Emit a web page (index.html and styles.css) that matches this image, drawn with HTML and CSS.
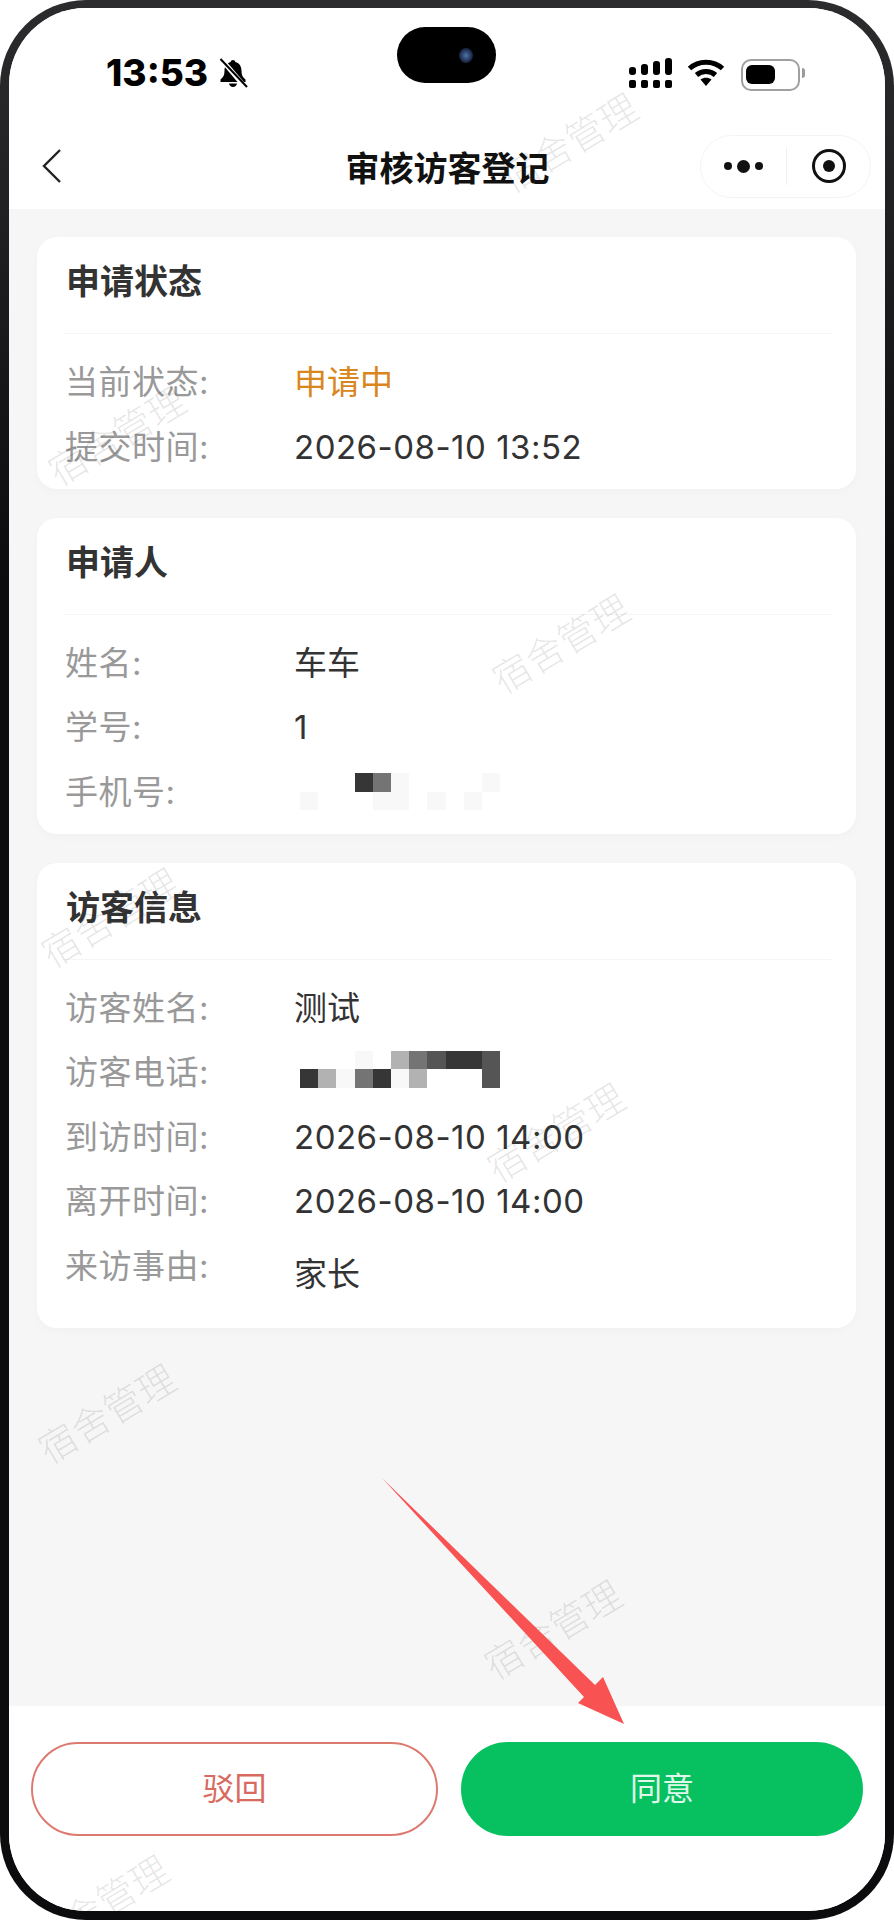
FILE: index.html
```html
<!DOCTYPE html>
<html lang="zh-CN">
  <head>
    <title>审核访客登记</title>
    <meta http-equiv="Content-Type" content="text/html; charset=UTF-8"/>
    <link rel="stylesheet" href="styles.css">
  </head>
  <body>
    <div class="phone">
      <div class="screen">
        <div class="notch"><span class="camera"></span></div>

        <div class="status-bar">
          <div class="status-left">
            <span class="time">13:53</span>
            <svg class="bell" viewBox="0 0 30 30">
              <path d="M15 2c1.300 0 2.200.9 2.300 2.100 4.200 1 6.200 4.400 6.200 9 0 4.300 1.200 6.300 4 8.500v2.400H2.500v-2.400c2.800-2.200 4-4.200 4-8.500 0-4.600 2-8 6.200-9C12.800 2.900 13.700 2 15 2z" fill="#000"/>
              <path d="M11 25.500h8c-.3 2.200-2 3.500-4 3.500s-3.700-1.300-4-3.500z" fill="#000"/>
              <path d="M4 2l23 27" stroke="#fff" stroke-width="5"/>
              <path d="M2.500 1L29 29" stroke="#000" stroke-width="2"/>
            </svg>
          </div>
          <div class="status-right">
            <div class="signal">
              <span class="bar bar-1"></span>
              <span class="bar bar-2"></span>
              <span class="bar bar-3"></span>
              <span class="bar bar-4"></span>
            </div>
            <svg class="wifi" viewBox="0 0 38 28">
              <path d="M2.500 10.500C11.500 2 26.500 2 35.500 10.500" fill="none" stroke="#000" stroke-width="5"/>
              <path d="M9.500 17c5.500-4.800 13.500-4.800 19 0" fill="none" stroke="#000" stroke-width="5"/>
              <path d="M13.500 21.500c3.300-2.200 7.700-2.200 11 0L19 28z" fill="#000"/>
            </svg>
            <div class="battery"><span class="battery-level"></span></div>
            <span class="battery-nub"></span>
          </div>
        </div>

        <div class="nav">
          <svg class="back" viewBox="0 0 20 34">
            <path d="M18 1L2 17l16 16" fill="none" stroke="#222" stroke-width="2.400"/>
          </svg>
          <div class="nav-title">审核访客登记</div>
          <div class="capsule">
            <div class="more">
              <span class="dot"></span>
              <span class="dot dot-big"></span>
              <span class="dot"></span>
            </div>
            <span class="capsule-line"></span>
            <div class="target"><span class="target-dot"></span></div>
          </div>
        </div>

        <div class="content">
          <div class="card">
            <div class="card-title">申请状态</div>
            <div class="card-body">
              <div class="row">
                <div class="label">当前状态:</div>
                <div class="value status-pending">申请中</div>
              </div>
              <div class="row">
                <div class="label">提交时间:</div>
                <div class="value date">2026-08-10 13:52</div>
              </div>
            </div>
          </div>

          <div class="card">
            <div class="card-title">申请人</div>
            <div class="card-body">
              <div class="row">
                <div class="label">姓名:</div>
                <div class="value">车车</div>
              </div>
              <div class="row">
                <div class="label">学号:</div>
                <div class="value">1</div>
              </div>
              <div class="row">
                <div class="label">手机号:</div>
                <div class="mosaic">
                  <span></span><span></span><span></span><span class="s-dark"></span><span class="s-mid"></span><span class="s-pale"></span><span></span><span></span><span></span><span></span><span class="s-pale"></span>
                  <span class="s-pale"></span><span></span><span></span><span></span><span class="s-pale"></span><span class="s-pale"></span><span></span><span class="s-pale"></span><span></span><span class="s-pale"></span><span></span>
                </div>
              </div>
            </div>
          </div>

          <div class="card">
            <div class="card-title">访客信息</div>
            <div class="card-body">
              <div class="row">
                <div class="label">访客姓名:</div>
                <div class="value">测试</div>
              </div>
              <div class="row">
                <div class="label">访客电话:</div>
                <div class="mosaic mosaic-up">
                  <span></span><span></span><span></span><span class="s-pale"></span><span></span><span class="s-light"></span><span class="s-mid"></span><span class="s-dim"></span><span class="s-dark"></span><span class="s-dark"></span><span class="s-dim"></span>
                  <span class="s-dark"></span><span class="s-light"></span><span class="s-pale"></span><span class="s-mid"></span><span class="s-dark"></span><span class="s-pale"></span><span class="s-light"></span><span></span><span></span><span></span><span class="s-dim"></span>
                </div>
              </div>
              <div class="row">
                <div class="label">到访时间:</div>
                <div class="value date">2026-08-10 14:00</div>
              </div>
              <div class="row">
                <div class="label">离开时间:</div>
                <div class="value date">2026-08-10 14:00</div>
              </div>
              <div class="row row-reason">
                <div class="label">来访事由:</div>
                <div class="value">家长</div>
              </div>
            </div>
          </div>
        </div>

        <div class="footer">
          <div class="btn btn-reject">驳回</div>
          <div class="btn btn-agree">同意</div>
        </div>

        <div class="watermarks">
          <span class="wm wm-1">宿舍管理</span>
          <span class="wm wm-2">宿舍管理</span>
          <span class="wm wm-3">宿舍管理</span>
          <span class="wm wm-4">宿舍管理</span>
          <span class="wm wm-5">宿舍管理</span>
          <span class="wm wm-6">宿舍管理</span>
          <span class="wm wm-7">宿舍管理</span>
          <span class="wm wm-8">宿舍管理</span>
        </div>
      </div>

      <svg class="arrow" viewBox="0 0 894 1920">
        <polygon points="382,1478 595,1685 603,1677 624,1724 578,1703 584,1697" fill="#f95252"/>
      </svg>
    </div>
  </body>
</html>
```

FILE: styles.css
```css
body {
  margin: 0;
  background: #fff;
  font-family: 'Inter', 'Noto Sans CJK SC', sans-serif;
}

.phone {
  position: relative;
  width: 894px;
  height: 1920px;
  padding: 8px 9px 9px;
  box-sizing: border-box;
  border-radius: 86px;
  background: linear-gradient(#2c2c2e, #0c0c0e 30%);
}

.screen {
  position: relative;
  display: flex;
  flex-direction: column;
  height: 100%;
  overflow: hidden;
  border-radius: 77px;
  background: #f6f6f6;
}

/* status bar */
.notch {
  position: absolute;
  left: 388px;
  top: 19px;
  width: 99px;
  height: 56px;
  border-radius: 28px;
  background: #000;
}

.camera {
  position: absolute;
  left: 62px;
  top: 21px;
  width: 14px;
  height: 15px;
  border-radius: 50%;
  background: radial-gradient(#4f74ab, #1c2c4c 60%, #05070c);
}

.status-bar {
  display: flex;
  justify-content: space-between;
  height: 65px;
  padding: 50px 80px 0 97px;
  background: #fff;
}

.status-left {
  display: flex;
  align-items: center;
  height: 30px;
  gap: 10px;
}

.time {
  font-size: 37px;
  line-height: 30px;
  font-weight: 800;
  color: #000;
}

.bell {
  width: 30px;
  height: 30px;
}

.status-right {
  display: flex;
  align-items: flex-start;
  height: 30px;
}

.signal {
  display: flex;
  gap: 5px;
  width: 43px;
  height: 30px;
  margin-right: 15px;
}

.bar {
  position: relative;
  display: block;
  width: 7px;
  height: 8px;
  margin-top: 22px;
  border-radius: 2px;
  background: #000;
}

.bar::before {
  content: "";
  position: absolute;
  left: 0;
  bottom: 13px;
  width: 7px;
  border-radius: 3px;
  background: #000;
}

.bar-1::before { height: 8px; }
.bar-2::before { height: 11px; }
.bar-3::before { height: 14px; }
.bar-4::before { height: 17px; }

.wifi {
  width: 38px;
  height: 28px;
  margin-right: 16px;
}

.battery {
  width: 51px;
  height: 24px;
  margin-top: 1px;
  padding: 2px;
  box-sizing: content-box;
  border: 2px solid #a0a0a0;
  border-radius: 10px;
}

.battery-level {
  display: block;
  width: 29px;
  height: 19px;
  margin: 2px 0 0 1px;
  border-radius: 6px;
  background: #000;
}

.battery-nub {
  width: 3px;
  height: 10px;
  margin: 10px 0 0 2px;
  border-radius: 0 3px 3px 0;
  background: #9a9a9a;
}

/* nav */
.nav {
  display: grid;
  grid-template-columns: 1fr auto 1fr;
  align-items: center;
  height: 86px;
  padding: 0 14px 0 15px;
  background: #fff;
}

.back {
  width: 20px;
  height: 34px;
  margin-left: 18px;
}

.nav-title {
  font-size: 34px;
  font-weight: 700;
  color: #111;
}

.capsule {
  justify-self: end;
  display: flex;
  align-items: center;
  width: 171px;
  height: 63px;
  box-sizing: border-box;
  border: 1px solid #f3f3f3;
  border-radius: 32px;
}

.more {
  display: flex;
  align-items: center;
  justify-content: center;
  gap: 5px;
  width: 85px;
}

.dot {
  width: 8px;
  height: 8px;
  border-radius: 50%;
  background: #111;
}

.dot-big {
  width: 13px;
  height: 13px;
}

.capsule-line {
  width: 1px;
  height: 38px;
  background: #f0f0f0;
}

.target {
  display: flex;
  align-items: center;
  justify-content: center;
  width: 34px;
  height: 34px;
  margin-left: 25px;
  box-sizing: border-box;
  border: 3.500px solid #111;
  border-radius: 50%;
}

.target-dot {
  width: 12px;
  height: 12px;
  border-radius: 50%;
  background: #111;
}

/* cards */
.content {
  flex: 1;
  display: flex;
  flex-direction: column;
  gap: 28.500px;
  padding: 28px 29px 0 28px;
}

.card {
  padding: 0 25px 0 26px;
  border-radius: 20px;
  background: #fff;
  box-shadow: 0 3px 10px rgba(0, 0, 0, 0.025);
}

.card-title {
  height: 96px;
  padding-left: 3px;
  border-bottom: 1px solid #f5f5f5;
  font-size: 34px;
  line-height: 90px;
  font-weight: 700;
  color: #333;
}

.card-body {
  padding: 16px 0 10px 2px;
}

.row {
  display: flex;
  height: 64.500px;
  align-items: center;
}

.label {
  flex: none;
  width: 229px;
  font-size: 33px;
  letter-spacing: 0.5px;
  line-height: 64px;
  color: #999;
}

.value {
  font-size: 33px;
  line-height: 64px;
  color: #333;
}

.date {
  letter-spacing: 0.5px;
}

.status-pending {
  color: #d9861c;
}

.row-reason {
  height: 84px;
  align-items: flex-start;
}

.row-reason .value {
  padding-top: 8px;
}

/* redacted numbers */
.mosaic {
  display: grid;
  grid-template-columns: repeat(11, 18.200px);
  grid-auto-rows: 18.500px;
  margin-left: 6px;
}

.mosaic-up {
  margin-top: -6px;
}

.s-dark { background: #363636; }
.s-dim { background: #555; }
.s-mid { background: #747474; }
.s-light { background: #b2b2b2; }
.s-pale { background: #f8f8f8; }

/* footer */
.footer {
  display: flex;
  gap: 23px;
  height: 205px;
  box-sizing: border-box;
  padding: 36px 22px 0 22px;
  background: #fff;
}

.btn {
  flex: 1;
  height: 94px;
  box-sizing: border-box;
  border-radius: 47px;
  text-align: center;
  font-size: 32px;
  line-height: 90px;
}

.btn-reject {
  flex: 407;
  border: 2px solid #dd7a70;
  color: #d96a5f;
}

.btn-agree {
  flex: 402;
  border: 2px solid #07c160;
  background: #07c160;
  color: #dff8e9;
}

/* overlays */
.watermarks {
  position: absolute;
  inset: 0;
  pointer-events: none;
}

.wm {
  position: absolute;
  transform: translate(-50%, -50%) rotate(-31deg);
  white-space: nowrap;
  font-size: 38px;
  font-weight: 300;
  line-height: 38px;
  color: rgba(0, 0, 0, 0.1);
}

.wm-1 { left: 560px; top: 135px; }
.wm-2 { left: 108px; top: 428px; }
.wm-3 { left: 552px; top: 636px; }
.wm-4 { left: 101px; top: 910px; }
.wm-5 { left: 547px; top: 1125px; }
.wm-6 { left: 98px; top: 1406px; }
.wm-7 { left: 544px; top: 1622px; }
.wm-8 { left: 91px; top: 1897px; }

.arrow {
  position: absolute;
  left: 0;
  top: 0;
  width: 894px;
  height: 1920px;
  pointer-events: none;
}
```
